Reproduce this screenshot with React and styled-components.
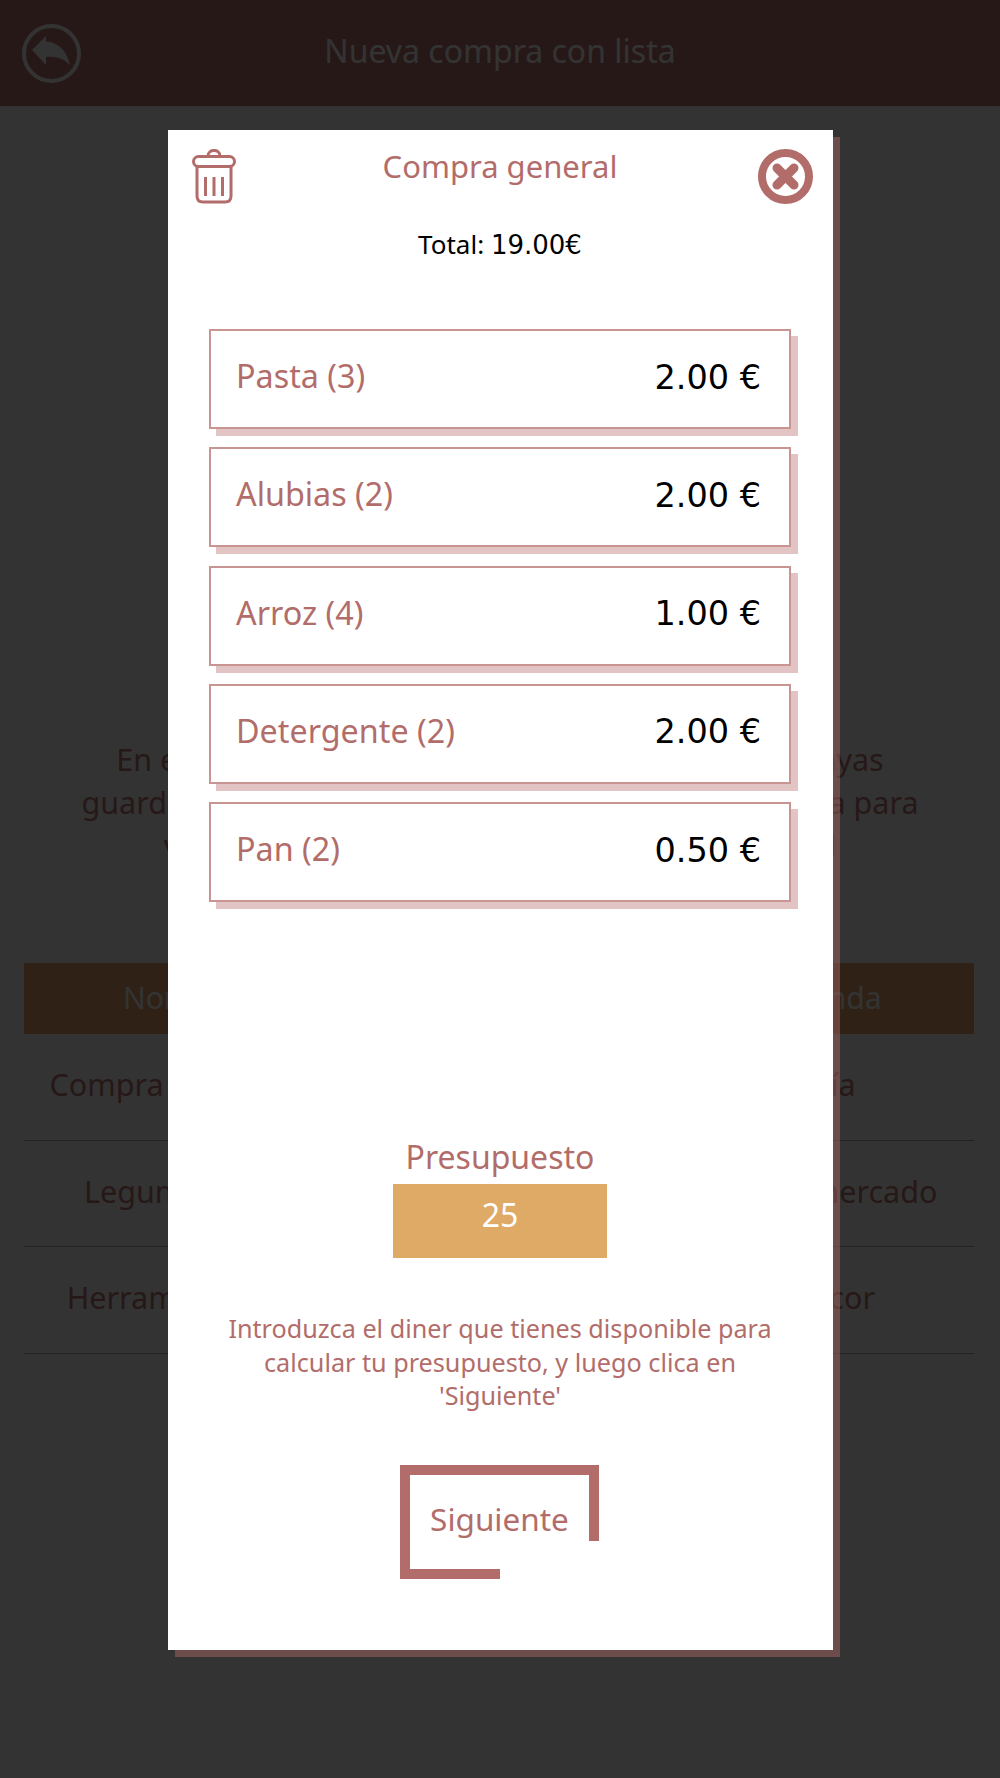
import React from "react";
import styled, { createGlobalStyle } from "styled-components";

const GlobalStyle = createGlobalStyle`
  html, body { margin: 0; padding: 0; background: #fff; }
  * { box-sizing: border-box; }
  body { font-family: "Noto Sans", "Open Sans", sans-serif; }
`;

const Page = styled.div`
  position: relative;
  width: 1000px;
  height: 1778px;
  overflow: hidden;
  background: #fff;
`;

const Header = styled.header`
  position: relative;
  height: 106px;
  padding-bottom: 6px;
  background: #be7873;
  display: flex;
  align-items: center;
  justify-content: center;
`;

const BackButton = styled.svg`
  position: absolute;
  left: 22px;
  top: 24px;
  width: 59px;
  height: 59px;
`;

const HeaderTitle = styled.h1`
  margin: 0;
  font-size: 32px;
  font-weight: 400;
  color: #fff;
`;

const Intro = styled.p`
  margin: 632px 0 0;
  font-size: 30.5px;
  line-height: 43px;
  text-align: center;
  white-space: nowrap;
  color: #be7873;
`;

const Table = styled.div`
  margin: 96px 26px 0 24px;
`;

const TableRow = styled.div`
  display: grid;
  grid-template-columns: 282px 1fr 284px;
  align-items: center;
  text-align: center;
  font-size: 30.5px;
  height: 106.5px;
  padding-bottom: 5px;
  color: #be7873;
  border-bottom: 1px solid #c0a8a8;
`;

const TableHead = styled.div`
  display: grid;
  grid-template-columns: 314px 1fr 280px;
  align-items: center;
  text-align: center;
  font-size: 30px;
  height: 71px;
  padding-bottom: 2px;
  background: #eba669;
  color: #fff;
`;

const Overlay = styled.div`
  position: absolute;
  inset: 0;
  background: rgba(0, 0, 0, 0.8);
  display: flex;
  justify-content: center;
  align-items: flex-start;
  padding-top: 130px;
`;

const Modal = styled.div`
  width: 665px;
  height: 1520px;
  background: #fff;
  box-shadow: 7px 7px 0 rgba(178, 109, 106, 0.45);
  display: flex;
  flex-direction: column;
  align-items: center;
`;

const ModalTop = styled.div`
  width: 100%;
  padding: 19px 20px 0;
  display: grid;
  grid-template-columns: 1fr auto 1fr;
  align-items: start;
`;

const ModalTitle = styled.h2`
  margin: -5px 0 0;
  font-size: 31px;
  line-height: 44px;
  font-weight: 400;
  color: #b26d6a;
`;

const CloseIcon = styled.svg`
  justify-self: end;
  width: 55px;
  height: 55px;
`;

const TrashIcon = styled.svg`
  margin-left: 4px;
  width: 44px;
  height: 55px;
`;

const Total = styled.div`
  margin-top: 22px;
  font-size: 26px;
  line-height: 36px;
  color: #000;
`;

const Amount = styled.span`
  font-family: "DejaVu Sans", sans-serif;
`;

const ItemList = styled.div`
  margin-top: 66px;
  width: 582px;
  display: flex;
  flex-direction: column;
  gap: 18.25px;
`;

const Item = styled.div`
  height: 100px;
  padding: 0 28px 8px 25px;
  background: #fff;
  border: 2px solid #c89593;
  box-shadow: 7px 7px 0 #e2c4c4;
  display: flex;
  align-items: center;
  justify-content: space-between;
  font-size: 32.3px;
`;

const ItemName = styled.span`
  color: #b26d6a;
`;

const ItemPrice = styled(Amount)`
  padding-top: 4px;
  font-size: 33.5px;
  color: #000;
`;

const BudgetLabel = styled.div`
  margin-top: 233px;
  font-size: 32px;
  line-height: 44px;
  color: #b26d6a;
`;

const BudgetInput = styled.div`
  margin-top: 5px;
  width: 214px;
  height: 74px;
  padding-top: 9px;
  background: #dfa966;
  color: #fff;
  font-size: 32px;
  line-height: 44px;
  text-align: center;
`;

const Help = styled.p`
  margin: 54px 0 0;
  width: 590px;
  font-size: 25.2px;
  line-height: 33.5px;
  text-align: center;
  color: #b26d6a;
`;

const NextButton = styled.button`
  position: relative;
  margin: 52px 1px 0 0;
  width: 199px;
  height: 114px;
  padding: 0 10px 16px 0;
  background: #fff;
  border: 0;
  border-top: 10px solid #b26d6a;
  border-left: 10px solid #b26d6a;
  color: #b26d6a;
  font-family: inherit;
  font-size: 31.5px;
  &::before {
    content: "";
    position: absolute;
    right: 0;
    top: -10px;
    width: 10px;
    height: 76px;
    background: #b26d6a;
  }
  &::after {
    content: "";
    position: absolute;
    left: -10px;
    bottom: 0;
    width: 100px;
    height: 10px;
    background: #b26d6a;
  }
`;

const items = [
  { name: "Pasta (3)", price: "2.00 €" },
  { name: "Alubias (2)", price: "2.00 €" },
  { name: "Arroz (4)", price: "1.00 €" },
  { name: "Detergente (2)", price: "2.00 €" },
  { name: "Pan (2)", price: "0.50 €" },
];

const lists = [
  ["Compra general", "19.00 €", "Día"],
  ["Legumbres", "8.00 €", "Supermercado"],
  ["Herramientas", "30.00 €", "Bricor"],
];

export default function App() {
  return (
    <Page>
      <GlobalStyle />
      <Header>
        <BackButton viewBox="0 0 59 59">
          <circle cx="29.5" cy="29.5" r="27.5" fill="none" stroke="#fff" strokeWidth="4" />
          <path d="M10 26 L24 12 V17.5 C36 18 45 27 48 41 C41 34 33 32 24 33 V41 Z" fill="#fff" />
        </BackButton>
        <HeaderTitle>Nueva compra con lista</HeaderTitle>
      </Header>
      <Intro>
        En esta pantalla aparecerán todas las listas que hayas
        <br />
        guardadas anteriormente. Selecciona la lista deseada para
        <br />
        ver sus productos y comenzar la compra actual
      </Intro>
      <Table>
        <TableHead>
          <span>Nombre</span>
          <span>Total</span>
          <span>Tienda</span>
        </TableHead>
        {lists.map((row) => (
          <TableRow key={row[0]}>
            <span>{row[0]}</span>
            <span>{row[1]}</span>
            <span>{row[2]}</span>
          </TableRow>
        ))}
      </Table>
      <Overlay>
        <Modal>
          <ModalTop>
            <TrashIcon viewBox="0 0 44 55" fill="none" stroke="#b26d6a" strokeWidth="3">
              <rect x="1.5" y="7.5" width="41" height="10" rx="5" />
              <path d="M16 7 C16 -0.5 28 -0.5 28 7" />
              <path d="M5 17 V47 C5 51 7 53 11 53 H33 C37 53 39 51 39 47 V17" />
              <path d="M13.5 28 V47 M22 28 V47 M30.5 28 V47" />
            </TrashIcon>
            <ModalTitle>Compra general</ModalTitle>
            <CloseIcon viewBox="0 0 55 55">
              <circle cx="27.5" cy="27.5" r="23.5" fill="none" stroke="#b26d6a" strokeWidth="8" />
              <path d="M19 19 L36 36 M36 19 L19 36" stroke="#b26d6a" strokeWidth="9" strokeLinecap="round" />
            </CloseIcon>
          </ModalTop>
          <Total>
            Total: <Amount>19.00€</Amount>
          </Total>
          <ItemList>
            {items.map((item) => (
              <Item key={item.name}>
                <ItemName>{item.name}</ItemName>
                <ItemPrice>{item.price}</ItemPrice>
              </Item>
            ))}
          </ItemList>
          <BudgetLabel>Presupuesto</BudgetLabel>
          <BudgetInput>25</BudgetInput>
          <Help>Introduzca el diner que tienes disponible para calcular tu presupuesto, y luego clica en 'Siguiente'</Help>
          <NextButton>Siguiente</NextButton>
        </Modal>
      </Overlay>
    </Page>
  );
}
